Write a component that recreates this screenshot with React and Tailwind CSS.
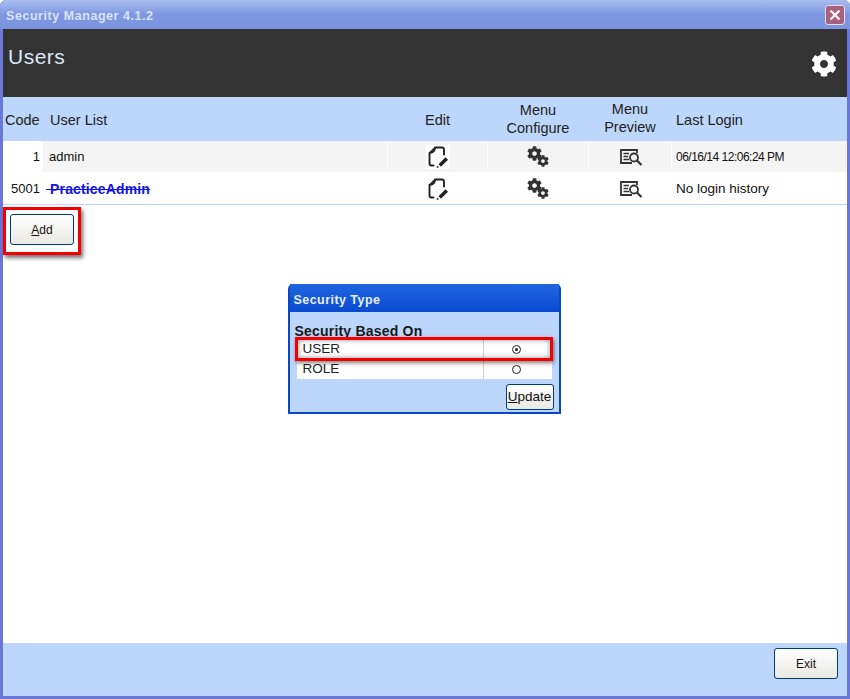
import React from "react";
import { FaCog } from "react-icons/fa";

const font = "font-['Liberation_Sans',Arial,sans-serif]";

function EditIcon({ shaded }) {
  return (
    <div className={`w-[24px] h-[24px] flex items-center justify-center ${shaded ? "bg-white" : ""}`}>
      <svg width="24" height="24" viewBox="0 0 24 24" fill="none">
        <path d="M9 2.5 H16 Q18 2.5 18 4.5 V9.5 M9 2.5 Q9 7.5 3.5 8 V18.5 Q3.5 20.5 5.5 20.5 H7.5" stroke="#222" strokeWidth="1.9" strokeLinecap="round" strokeLinejoin="round" />
        <path d="M9 2.5 L3.5 8" stroke="#222" strokeWidth="1.6" />
        <path d="M12.5 19.2 L19.5 12.2 L22 14.7 L15 21.7 Z" fill="#222" />
        <path d="M11.5 20.5 L10.5 23 L13 22.2 Z" fill="#222" />
      </svg>
    </div>
  );
}

function GearsIcon() {
  return (
    <div className="relative w-[22px] h-[21px] text-[#333]">
      <FaCog size={15} className="absolute left-0 top-0" />
      <FaCog size={12} className="absolute right-0 bottom-0" />
    </div>
  );
}

function PreviewIcon() {
  return (
    <svg width="24" height="18" viewBox="0 0 24 18" fill="none">
      <path d="M13 15 H2 V2 H18 V5" stroke="#333" strokeWidth="1.8" />
      <path d="M4.5 5.5 H10 M4.5 8.5 H9 M4.5 11.5 H10" stroke="#333" strokeWidth="1.6" />
      <circle cx="15" cy="9.5" r="4" stroke="#333" strokeWidth="1.8" />
      <path d="M18 12.5 L22.5 17" stroke="#333" strokeWidth="2.2" />
    </svg>
  );
}

function Row({ code, name, last, shaded, link }) {
  const cell = "flex items-center justify-center h-full";
  const bg = shaded ? "bg-[#f4f4f4]" : "bg-white";
  return (
    <div className={`flex items-stretch text-[13px] text-[#111] ${link ? "h-[33px] border-b border-[#bcd4f7]" : "h-[31px]"}`}>
      <div className={`w-[40px] bg-white flex items-center justify-end pr-[3px] ${link ? "pt-[2px]" : "pt-[1px]"}`}>{code}</div>
      <div className={`w-[344px] flex items-center pl-[6px] ${bg} ${link ? "pt-[2px]" : "pt-[1px]"}`}>
        {link ? <span className="font-bold text-[14px] tracking-[0.15px] text-[#1414e6] line-through -ml-[3px] whitespace-pre">{"\u00a0PracticeAdmin"}</span> : name}
      </div>
      <div className={`${cell} w-[101px] ${bg} ${shaded ? "border-x border-[#fafafa]" : "pt-[1px]"}`}><EditIcon shaded={shaded} /></div>
      <div className={`${cell} w-[100px] ${bg} ${link ? "pt-[1px]" : ""}`}><GearsIcon /></div>
      <div className={`${cell} w-[84px] pl-[2px] ${bg} ${shaded ? "border-x border-[#fafafa]" : "pt-[1px]"}`}><PreviewIcon /></div>
      <div className={`flex-1 flex items-center pl-[4px] ${bg} ${link ? "pt-[2px] text-[13.5px]" : "pt-[1px] text-[12px] tracking-[-0.5px]"}`}>{last}</div>
    </div>
  );
}

function XpButton({ className, children }) {
  return (
    <button className={`rounded-[3px] border border-[#003c74] bg-gradient-to-b from-white to-[#e9e8e2] text-[12px] text-[#111] ${className}`}>
      {children}
    </button>
  );
}

export default function App() {
  return (
    <div className={`relative w-[850px] h-[699px] flex flex-col overflow-hidden rounded-t-[6px] bg-[#6a76d8] ${font}`}>
      {/* title bar */}
      <div className="h-[29px] flex items-center justify-between pl-[6px] pr-[5px] bg-gradient-to-b from-[#a9bdf0] via-[#7f97e0] to-[#7a94de]">
        <span className="text-[12.5px] mt-[4px] font-bold tracking-[0.55px] text-[#d9e2f8] whitespace-nowrap">Security Manager 4.1.2</span>
        <div className="w-[20px] h-[20px] mt-[1px] rounded-[3px] border border-[#e2dcee] bg-[#a8607f] flex items-center justify-center">
          <svg width="12" height="12" viewBox="0 0 12 12"><path d="M1.5 1.5 L10.5 10.5 M10.5 1.5 L1.5 10.5" stroke="#f7f2f5" strokeWidth="2.4" /></svg>
        </div>
      </div>

      {/* window body */}
      <div className="flex-1 flex flex-col mx-[3px] mb-[3px] bg-white">
        <div className="h-[68px] bg-[#333333] flex items-start justify-between pl-[5px] pr-[10px]">
          <span className="text-[21px] leading-none mt-[17px] tracking-[0.5px] text-[#dfe6f7]">Users</span>
          <FaCog size={26} className="text-white mt-[22px]" />
        </div>

        <div className="h-[44px] flex items-stretch bg-[#bdd6fb] text-[14.5px] text-[#222]">
          <div className="w-[40px] flex items-center pl-[2px] pt-[3px]">Code</div>
          <div className="w-[344px] flex items-center pl-[7px] pt-[3px]">User List</div>
          <div className="w-[101px] flex items-center justify-center pt-[3px]">Edit</div>
          <div className="w-[100px] flex items-center justify-center text-center leading-[18px]">Menu<br />Configure</div>
          <div className="w-[84px] flex items-center justify-center text-center leading-[18px] pb-[3px]">Menu<br />Preview</div>
          <div className="flex-1 flex items-center pl-[4px] pt-[3px]">Last Login</div>
        </div>

        <Row code="1" name="admin" last="06/16/14 12:06:24 PM" shaded />
        <Row code="5001" last="No login history" link />

        <div className="pl-[7px] pt-[9px]">
          <div className="relative w-[64px]">
            <XpButton className="w-[64px] h-[31px]"><u>A</u>dd</XpButton>
            <div className="absolute left-[-7px] top-[-7px] w-[78px] h-[48px] border-[3px] border-[#f40000] shadow-[2px_3px_4px_rgba(0,0,0,0.55)]" />
          </div>
        </div>

        <div className="flex-1 flex justify-center items-start pt-[39px] pr-[2px]">
          {/* dialog */}
          <div className="relative w-[273px] h-[130px] rounded-t-[5px] bg-[#0a4fd6] border-x-[2px] border-b-[2px] border-[#0a46c8] flex flex-col">
            <div className="h-[28px] flex items-center pl-[4px] pt-[4px] bg-gradient-to-b from-[#1f66e0] to-[#0a4ad0]">
              <span className="text-[12.5px] font-bold tracking-[0.45px] text-[#e6eefc]">Security Type</span>
            </div>
            <div className="flex-1 bg-[#bdd6fb] px-[5px] pt-[12px] flex flex-col">
              <div className="text-[14px] leading-[14px] font-bold text-[#1a1a1a] tracking-[0.2px]">Security Based On</div>
              <div className="mt-[2px] mx-[2px] bg-white text-[13.5px] text-[#222]">
                <div className="h-[20px] flex items-center border-b border-[#e4e4e4]">
                  <div className="w-[187px] pl-[6px] border-r border-[#d0d0d0] h-full flex items-center">USER</div>
                  <div className="flex-1 flex justify-center items-center pr-[2px]">
                    <div className="w-[9px] h-[9px] rounded-full border-[1.5px] border-[#222] flex items-center justify-center"><div className="w-[3px] h-[3px] rounded-full bg-[#222]" /></div>
                  </div>
                </div>
                <div className="h-[19px] flex items-center">
                  <div className="w-[187px] pl-[6px] border-r border-[#d0d0d0] h-full flex items-center">ROLE</div>
                  <div className="flex-1 flex justify-center items-center pr-[2px]">
                    <div className="w-[9px] h-[9px] rounded-full border-[1.5px] border-[#222]" />
                  </div>
                </div>
              </div>
              <div className="flex justify-end mt-[5px]">
                <XpButton className="w-[48px] h-[26px] text-[13.5px] px-0 whitespace-nowrap"><u>U</u>pdate</XpButton>
              </div>
            </div>
            <div className="absolute left-[5px] top-[53px] w-[258px] h-[24px] border-[3px] border-[#f40000] shadow-[1px_2px_4px_rgba(0,0,0,0.5),inset_0_0_5px_rgba(0,0,0,0.45)]" />
          </div>
        </div>

        <div className="h-[53px] bg-[#bdd6fb] flex justify-end items-start pt-[5px] pr-[9px]">
          <XpButton className="w-[64px] h-[31px]">Exit</XpButton>
        </div>
      </div>
    </div>
  );
}
